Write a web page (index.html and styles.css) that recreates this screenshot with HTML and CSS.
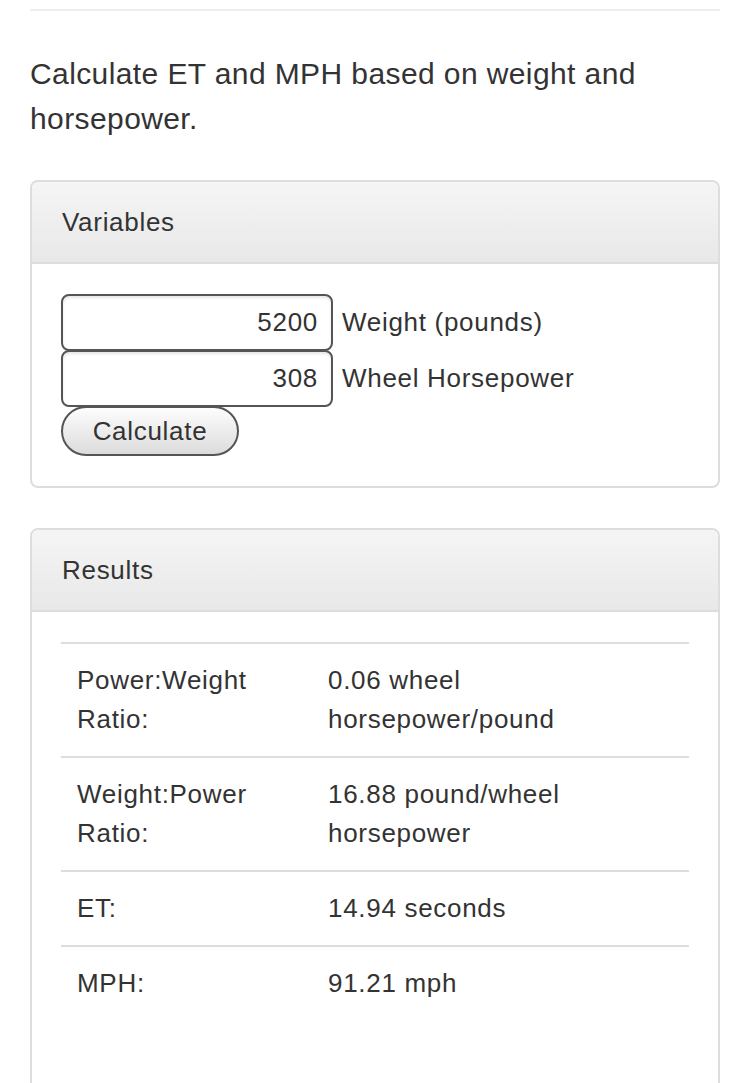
FILE: index.html
```html
<!DOCTYPE html>
<html lang="en">
    <head>
        <meta charset="utf-8">
        <title>ET and MPH Calculator</title>
        <meta name="viewport" content="width=device-width, initial-scale=1">
        <link rel="stylesheet" href="styles.css">
    </head>
    <body>
        <div class="container">
            <hr class="rule">
            <p class="lead">Calculate ET and MPH based on weight and horsepower.</p>

            <div class="panel">
                <div class="panel-heading">Variables</div>
                <div class="panel-body">
                    <form action="#" class="calc">
                        <div class="field">
                            <input type="text" id="weight" name="weight" value="5200">
                            <label for="weight">Weight (pounds)</label>
                        </div>
                        <div class="field">
                            <input type="text" id="hp" name="hp" value="308">
                            <label for="hp">Wheel Horsepower</label>
                        </div>
                        <button type="button" class="button">Calculate</button>
                    </form>
                </div>
            </div>

            <div class="panel">
                <div class="panel-heading">Results</div>
                <div class="panel-body">
                    <table class="results">
                        <tr>
                            <td class="name">Power:Weight Ratio:</td>
                            <td>0.06 wheel horsepower/pound</td>
                        </tr>
                        <tr>
                            <td class="name">Weight:Power Ratio:</td>
                            <td>16.88 pound/wheel horsepower</td>
                        </tr>
                        <tr>
                            <td class="name">ET:</td>
                            <td>14.94 seconds</td>
                        </tr>
                        <tr>
                            <td class="name">MPH:</td>
                            <td>91.21 mph</td>
                        </tr>
                    </table>
                </div>
            </div>
        </div>
    </body>
</html>
```

FILE: styles.css
```css
* {
    margin: 0;
    padding: 0;
    box-sizing: border-box;
}
body {
    font-family: "Liberation Sans", Arial, sans-serif;
    color: #333;
    background: #fff;
    letter-spacing: 0.7px;
}
.container {
    padding: 0 30px;
}
.rule {
    border: none;
    border-top: 2px solid #eee;
    margin: 9px 0 0 0;
}
.lead {
    font-size: 30px;
    line-height: 45px;
    letter-spacing: 0.4px;
    margin: 40px 0 39px 0;
}
.panel {
    border: 2px solid #ddd;
    border-radius: 8px;
    margin: 0 0 40px 0;
    overflow: hidden;
}
.panel-heading {
    height: 82px;
    line-height: 80px;
    padding: 0 30px;
    font-size: 26px;
    background: linear-gradient(#f5f5f5, #e8e8e8);
    border-bottom: 2px solid #ddd;
}
.panel-body {
    padding: 30px 29px;
}
.field {
    display: flex;
    align-items: center;
}
.field input {
    width: 272px;
    height: 57px;
    border: 2px solid #555;
    border-radius: 8px;
    padding: 0 13px;
    font-family: inherit;
    font-size: 26px;
    letter-spacing: 0.7px;
    color: #333;
    text-align: right;
    outline: none;
    box-shadow: inset 0 2px 3px rgba(0, 0, 0, 0.1);
}
.field + .field {
    margin-top: -1px;
}
.field label {
    font-size: 26px;
    margin-left: 9px;
}
.button {
    display: block;
    width: 178px;
    height: 50px;
    margin-top: -1px;
    border: 2px solid #555;
    border-radius: 25px;
    background: linear-gradient(#fdfdfd, #dcdcdc);
    font-family: inherit;
    font-size: 26px;
    letter-spacing: 0.7px;
    color: #333;
}
.results {
    width: 100%;
    border-collapse: collapse;
    font-size: 26px;
    line-height: 39px;
    margin-bottom: 40px;
}
.results td {
    border-top: 2px solid #ddd;
    padding: 17px 16px;
    vertical-align: top;
}
.results td.name {
    width: 251px;
}
```
